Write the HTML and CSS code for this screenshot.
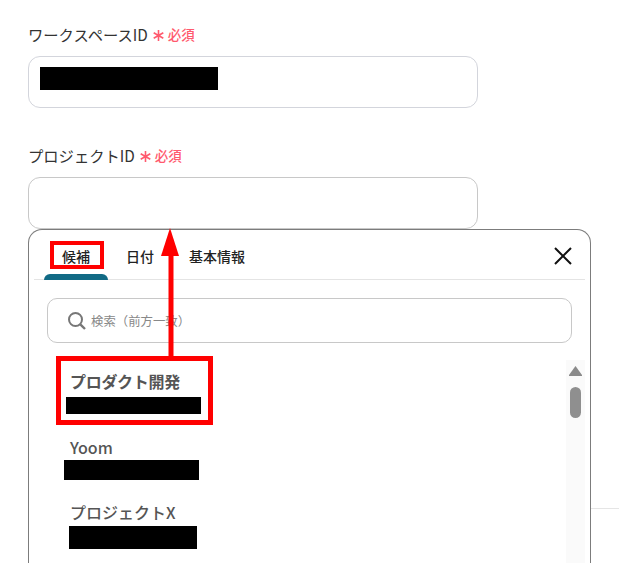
FILE: index.html
```html
<!DOCTYPE html>
<html lang="ja">
<head>
<meta charset="utf-8">
<title>プロジェクトID</title>
<link rel="stylesheet" href="styles.css">
</head>
<body>
<main class="page">
  <section class="field first">
    <div class="label">ワークスペースID
      <svg class="star" width="11" height="11" viewBox="0 0 11 11"><path d="M5.5 0V11M.7 2.7 10.3 8.3M10.3 2.7 .7 8.3" stroke="#ff5a6e" stroke-width="1.6" fill="none"/></svg>
      <span class="req">必須</span></div>
    <div class="input"><div class="redact r1"></div></div>
  </section>
  <section class="field second">
    <div class="label">プロジェクトID
      <svg class="star" width="11" height="11" viewBox="0 0 11 11"><path d="M5.5 0V11M.7 2.7 10.3 8.3M10.3 2.7 .7 8.3" stroke="#ff5a6e" stroke-width="1.6" fill="none"/></svg>
      <span class="req">必須</span></div>
    <div class="input alt"></div>
  </section>
  <section class="popup">
    <div class="tabs">
      <div class="tab active">候補</div>
      <div class="tab">日付</div>
      <div class="tab">基本情報</div>
      <svg class="close" width="18" height="18" viewBox="0 0 18 18"><path d="M1 1 17 17M17 1 1 17" stroke="#111" stroke-width="2" fill="none"/></svg>
    </div>
    <div class="search">
      <svg width="20" height="20" viewBox="0 0 20 20"><circle cx="8.5" cy="8.5" r="6.5" stroke="#777" stroke-width="2" fill="none"/><path d="M13.3 13.3 18 18" stroke="#777" stroke-width="2.4" fill="none"/></svg>
      <span>検索（前方一致）</span>
    </div>
    <div class="list">
      <div class="items">
        <div class="item i1"><div class="name">プロダクト開発</div><div class="redact r2"></div></div>
        <div class="item i2"><div class="name">Yoom</div><div class="redact r3"></div></div>
        <div class="item i3"><div class="name">プロジェクトX</div><div class="redact r4"></div></div>
      </div>
      <div class="scroll"><div class="up"></div><div class="thumb"></div></div>
    </div>
  </section>
  <div class="rule"></div>
  <div class="mark tabmark"></div>
  <div class="mark itemmark"></div>
  <svg class="arrow" width="20" height="130" viewBox="0 0 20 130"><path d="M11 128V26" stroke="#f00" stroke-width="5" fill="none"/><path d="M10 0 19 28H1Z" fill="#f00"/></svg>
</main>
</body>
</html>
```

FILE: styles.css
```css
* { box-sizing: border-box; }
html, body { margin: 0; padding: 0; background: #fff; }
body { font-family: "Noto Sans CJK JP", "Noto Sans", "Liberation Sans", sans-serif; }
.page { position: relative; width: 619px; height: 563px; overflow: hidden; padding-left: 28px; }
.field { width: 450px; }
.first { padding-top: 25px; }
.second { padding-top: 37px; }
.label { display: flex; align-items: center; font-size: 15.3px; line-height: 21px; color: #333; height: 31px; padding-bottom: 12px; }
.star { margin: 2px 0 0 5px; }
.req { color: #ff5a6e; font-size: 13.5px; font-weight: 500; margin-left: 4px; }
.input { height: 52px; border: 1px solid #d3d5dc; border-radius: 12px; background: #fff; padding: 10px 0 0 11px; }
.input.alt { border-color: #c8c8c8; }
.second .label { height: 32px; }
.redact { background: #000; }
.r1 { width: 178px; height: 23px; }
.popup { width: 563px; height: 340px; border: 1px solid #7c7c7c; border-bottom: 0; border-radius: 14px 14px 0 0; background: #fff; box-shadow: -6px 60px 40px -30px rgba(0,0,0,.03); overflow: hidden; }
.tabs { display: flex; align-items: flex-start; height: 50px; margin: 0 5px; border-bottom: 1px solid #e4e4e4; padding-left: 10px; position: relative; }
.tab { position: relative; width: 64px; height: 50px; padding-top: 15px; font-size: 14px; line-height: 22px; font-weight: 500; color: #222; text-align: center; }
.tab.active::after { content: ""; position: absolute; left: 0; right: 0; bottom: 0; height: 6px; background: #116a85; border-radius: 6px 6px 0 0; }
.tab:nth-child(3) { width: 92px; margin-left: -1px; }
.close { position: absolute; right: 13px; top: 17px; }
.search { display: flex; align-items: center; gap: 4px; height: 45px; margin: 18px 18px 0 18px; border: 1px solid #c8c8c8; border-radius: 10px; padding-left: 19px; font-size: 12.4px; color: #888; }
.list { display: flex; justify-content: space-between; margin-top: 17px; padding-right: 5px; }
.items { flex: 1; }
.name { font-size: 16px; line-height: 20px; color: #555; font-weight: 500; padding-left: 41px; }
.i1 { padding-top: 11px; }
.i1 .name { font-weight: 700; letter-spacing: -.3px; }
.i2 { padding-top: 23px; }
.i3 { padding-top: 22px; }
.r2 { width: 135px; height: 17px; margin: 6px 0 0 37px; }
.r3 { width: 135px; height: 20px; margin: 3px 0 0 35px; }
.r4 { width: 128px; height: 23px; margin: 4px 0 0 40px; }
.scroll { width: 19px; height: 300px; background: #fafafa; padding: 6px 3px 0; }
.up { width: 13px; height: 10px; background: #8a8a8a; clip-path: polygon(50% 0, 100% 90%, 100% 100%, 0 100%, 0 90%); }
.thumb { width: 11px; height: 31px; margin: 11px 0 0 1px; border-radius: 6px; background: #8f8f8f; }
.rule { position: absolute; left: 591px; top: 508px; width: 28px; height: 1px; background: #e5e5e5; }
.mark { position: absolute; border-style: solid; border-color: #f00; }
.tabmark { left: 50px; top: 241px; width: 54px; height: 28px; border-width: 4px; }
.itemmark { left: 56px; top: 356px; width: 157px; height: 69px; border-width: 5px; }
.arrow { position: absolute; left: 160px; top: 228px; }
```
